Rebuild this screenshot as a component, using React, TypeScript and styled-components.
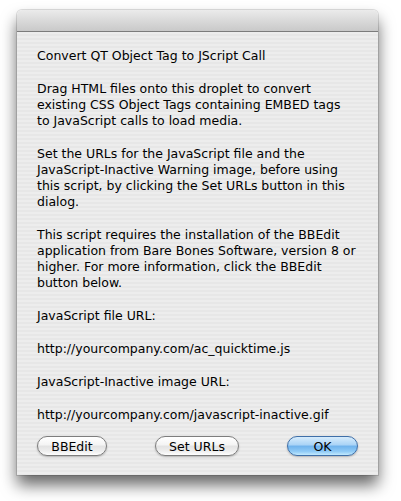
import { FC } from 'react';
import styled, { createGlobalStyle } from 'styled-components';

const GlobalStyle = createGlobalStyle`
    html, body {
        margin: 0;
        padding: 0;
        background: #ffffff;
    }
`;

const Page = styled.div`
    width: 401px;
    height: 501px;
    padding: 10px 0 0 17px;
    box-sizing: border-box;
    overflow: hidden;
`;

// ----------------------------------------------------------------------------

const Window = styled.div`
    width: 361px;
    height: 465px;
    display: flex;
    flex-direction: column;
    border-radius: 5px 5px 0 0;
    box-shadow: 0 10px 16px rgba(0, 0, 0, 0.6), 0 0 0 1px rgba(0, 0, 0, 0.12);
    font-family: 'DejaVu Sans', 'Noto Sans', sans-serif;
    font-size: 12.5px;
    color: #000;
`;

const TitleBar = styled.div`
    height: 21px;
    flex-shrink: 0;
    border-radius: 5px 5px 0 0;
    background: linear-gradient(#ebebeb, #d6d6d6 60%, #c9c9c9);
    border-bottom: 1px solid #7c7c7c;
`;

const Body = styled.div`
    flex-grow: 1;
    display: flex;
    flex-direction: column;
    padding: 16px 20px 19px 20px;
    background: repeating-linear-gradient(
        #ededed 0px,
        #ededed 2px,
        #e7e7e7 2px,
        #e7e7e7 4px
    );
`;

const Text = styled.p`
    margin: 0 0 17px 0;
    line-height: 16px;
    white-space: pre-line;

    &:last-of-type {
        margin-bottom: 0;
    }
`;

// ----------------------------------------------------------------------------

const ButtonRow = styled.div`
    margin-top: 13px;
    display: flex;
    justify-content: space-between;
`;

const AquaButton = styled.button<{ $width: number; $default?: boolean }>`
    width: ${({ $width }) => $width}px;
    height: 20px;
    padding: 0;
    border-radius: 10px;
    font-family: 'DejaVu Sans', 'Noto Sans', sans-serif;
    font-size: 12.5px;
    color: #000;
    border: 1px solid ${({ $default }) => ($default ? '#3f6fa8' : '#7d7d7d')};
    background: ${({ $default }) =>
        $default
            ? 'linear-gradient(#d7ecfc 0%, #a9d3f6 45%, #6fb2ec 50%, #8fcaf6 80%, #c2eafe 100%)'
            : 'linear-gradient(#ffffff 0%, #f4f4f4 45%, #e2e2e2 50%, #efefef 80%, #ffffff 100%)'};
    box-shadow: 0 1px 2px rgba(0, 0, 0, 0.25);
`;

const App: FC = () => (
    <>
        <GlobalStyle />
        <Page>
            <Window>
                <TitleBar />
                <Body>
                    <Text>Convert QT Object Tag to JScript Call</Text>
                    <Text>
                        {'Drag HTML files onto this droplet to convert\nexisting CSS Object Tags containing EMBED tags\nto JavaScript calls to load media.'}
                    </Text>
                    <Text>
                        {'Set the URLs for the JavaScript file and the\nJavaScript-Inactive Warning image, before using\nthis script, by clicking the Set URLs button in this\ndialog.'}
                    </Text>
                    <Text>
                        {'This script requires the installation of the BBEdit\napplication from Bare Bones Software, version 8 or\nhigher. For more information, click the BBEdit\nbutton below.'}
                    </Text>
                    <Text>JavaScript file URL:</Text>
                    <Text>http://yourcompany.com/ac_quicktime.js</Text>
                    <Text>JavaScript-Inactive image URL:</Text>
                    <Text>http://yourcompany.com/javascript-inactive.gif</Text>
                    <ButtonRow>
                        <AquaButton $width={70}>BBEdit</AquaButton>
                        <AquaButton $width={84}>Set URLs</AquaButton>
                        <AquaButton $width={71} $default>
                            OK
                        </AquaButton>
                    </ButtonRow>
                </Body>
            </Window>
        </Page>
    </>
);

export default App;
